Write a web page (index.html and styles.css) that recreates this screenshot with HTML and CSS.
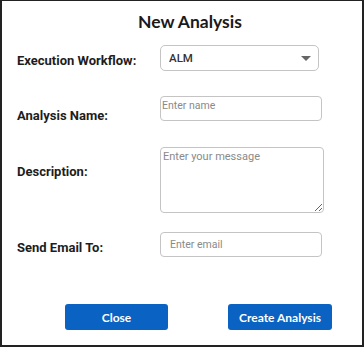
FILE: index.html
```html
<!DOCTYPE html>
<html lang="en">
<head>
    <meta charset="UTF-8">
    <meta name="viewport" content="width=device-width, initial-scale=1.0">
    <title>New Analysis</title>
    <link rel="stylesheet" href="styles.css">
</head>
<body>

<div class="dialog">
    <h2>New Analysis</h2>

    <form id="analysis-form">
        <div class="row row-workflow">
            <label for="workflow">Execution Workflow:</label>
            <div class="select-wrap">
                <select id="workflow" name="workflow">
                    <option>ALM</option>
                </select>
                <span class="caret"></span>
            </div>
        </div>

        <div class="row row-name">
            <label for="name">Analysis Name:</label>
            <input type="text" id="name" name="name" placeholder="Enter name">
        </div>

        <div class="row row-desc">
            <label for="description">Description:</label>
            <textarea id="description" name="description" placeholder="Enter your message"></textarea>
        </div>

        <div class="row row-email">
            <label for="email">Send Email To:</label>
            <input type="email" id="email" name="email" placeholder="Enter email">
        </div>

        <div class="actions">
            <button class="btn btn-close" type="button">Close</button>
            <button class="btn btn-create" type="submit">Create Analysis</button>
        </div>
    </form>
</div>

</body>
</html>
```

FILE: styles.css
```css
* {
    box-sizing: border-box;
}

body {
    margin: 0;
    padding: 0;
    background-color: white;
    font-family: Roboto, Arial, sans-serif;
}

.dialog {
    width: 364px;
    height: 347px;
    border: 2px solid #222;
    border-top-width: 1px;
    background-color: white;
}

h2 {
    margin: 0;
    padding-top: 11px;
    padding-left: 16px;
    height: 44px;
    text-align: center;
    font-family: Lato, "Open Sans", sans-serif;
    font-size: 17.5px;
    font-weight: 700;
    line-height: 20px;
    color: #1a1a1a;
}

form {
    padding-left: 15px;
}

.row {
    display: flex;
    align-items: flex-start;
}

.row label {
    width: 143px;
    font-size: 13px;
    font-weight: 700;
    line-height: 16px;
    color: #1d1d1d;
}

.row-workflow label {
    padding-top: 8px;
}

.row-name {
    margin-top: 25px;
}

.row-name label {
    padding-top: 12px;
}

.row-desc {
    margin-top: 23px;
}

.row-desc label {
    padding-top: 17px;
}

.row-email {
    margin-top: 19px;
}

.row-email label {
    padding-top: 8px;
}

.select-wrap {
    position: relative;
    width: 159px;
    height: 26px;
}

select {
    appearance: none;
    width: 100%;
    height: 100%;
    padding: 0 8px;
    border: 1px solid #c4c4c4;
    border-radius: 5px;
    background-color: white;
    font-family: Roboto, Arial, sans-serif;
    font-size: 11.5px;
    font-weight: 500;
    color: #333;
}

.caret {
    position: absolute;
    right: 8px;
    top: 11px;
    width: 0;
    height: 0;
    border-left: 5px solid transparent;
    border-right: 5px solid transparent;
    border-top: 5px solid #666;
}

input[type="text"], input[type="email"], textarea {
    border: 1px solid #c4c4c4;
    border-radius: 4px;
    background-color: white;
    font-family: Roboto, Arial, sans-serif;
    font-size: 10.5px;
    color: #333;
}

textarea {
    font-size: 11px;
}

input::placeholder, textarea::placeholder {
    color: #8a8a8a;
}

#name {
    width: 162px;
    height: 25px;
    padding: 0 0 6px 1px;
}

#description {
    width: 164px;
    height: 66px;
    padding: 2px 2px;
    resize: vertical;
}

#email {
    width: 162px;
    height: 25px;
    padding: 0 9px;
}

.actions {
    display: flex;
    margin-top: 47px;
    padding-left: 48px;
    gap: 60px;
}

.btn {
    height: 26px;
    border: none;
    border-radius: 3px;
    background-color: #0a62c2;
    color: white;
    font-family: Lato, "Open Sans", sans-serif;
    font-size: 12px;
    font-weight: 700;
    cursor: pointer;
}

.btn-close {
    width: 103px;
}

.btn-create {
    width: 104px;
}

.btn:hover {
    background-color: #0853a5;
}
```
